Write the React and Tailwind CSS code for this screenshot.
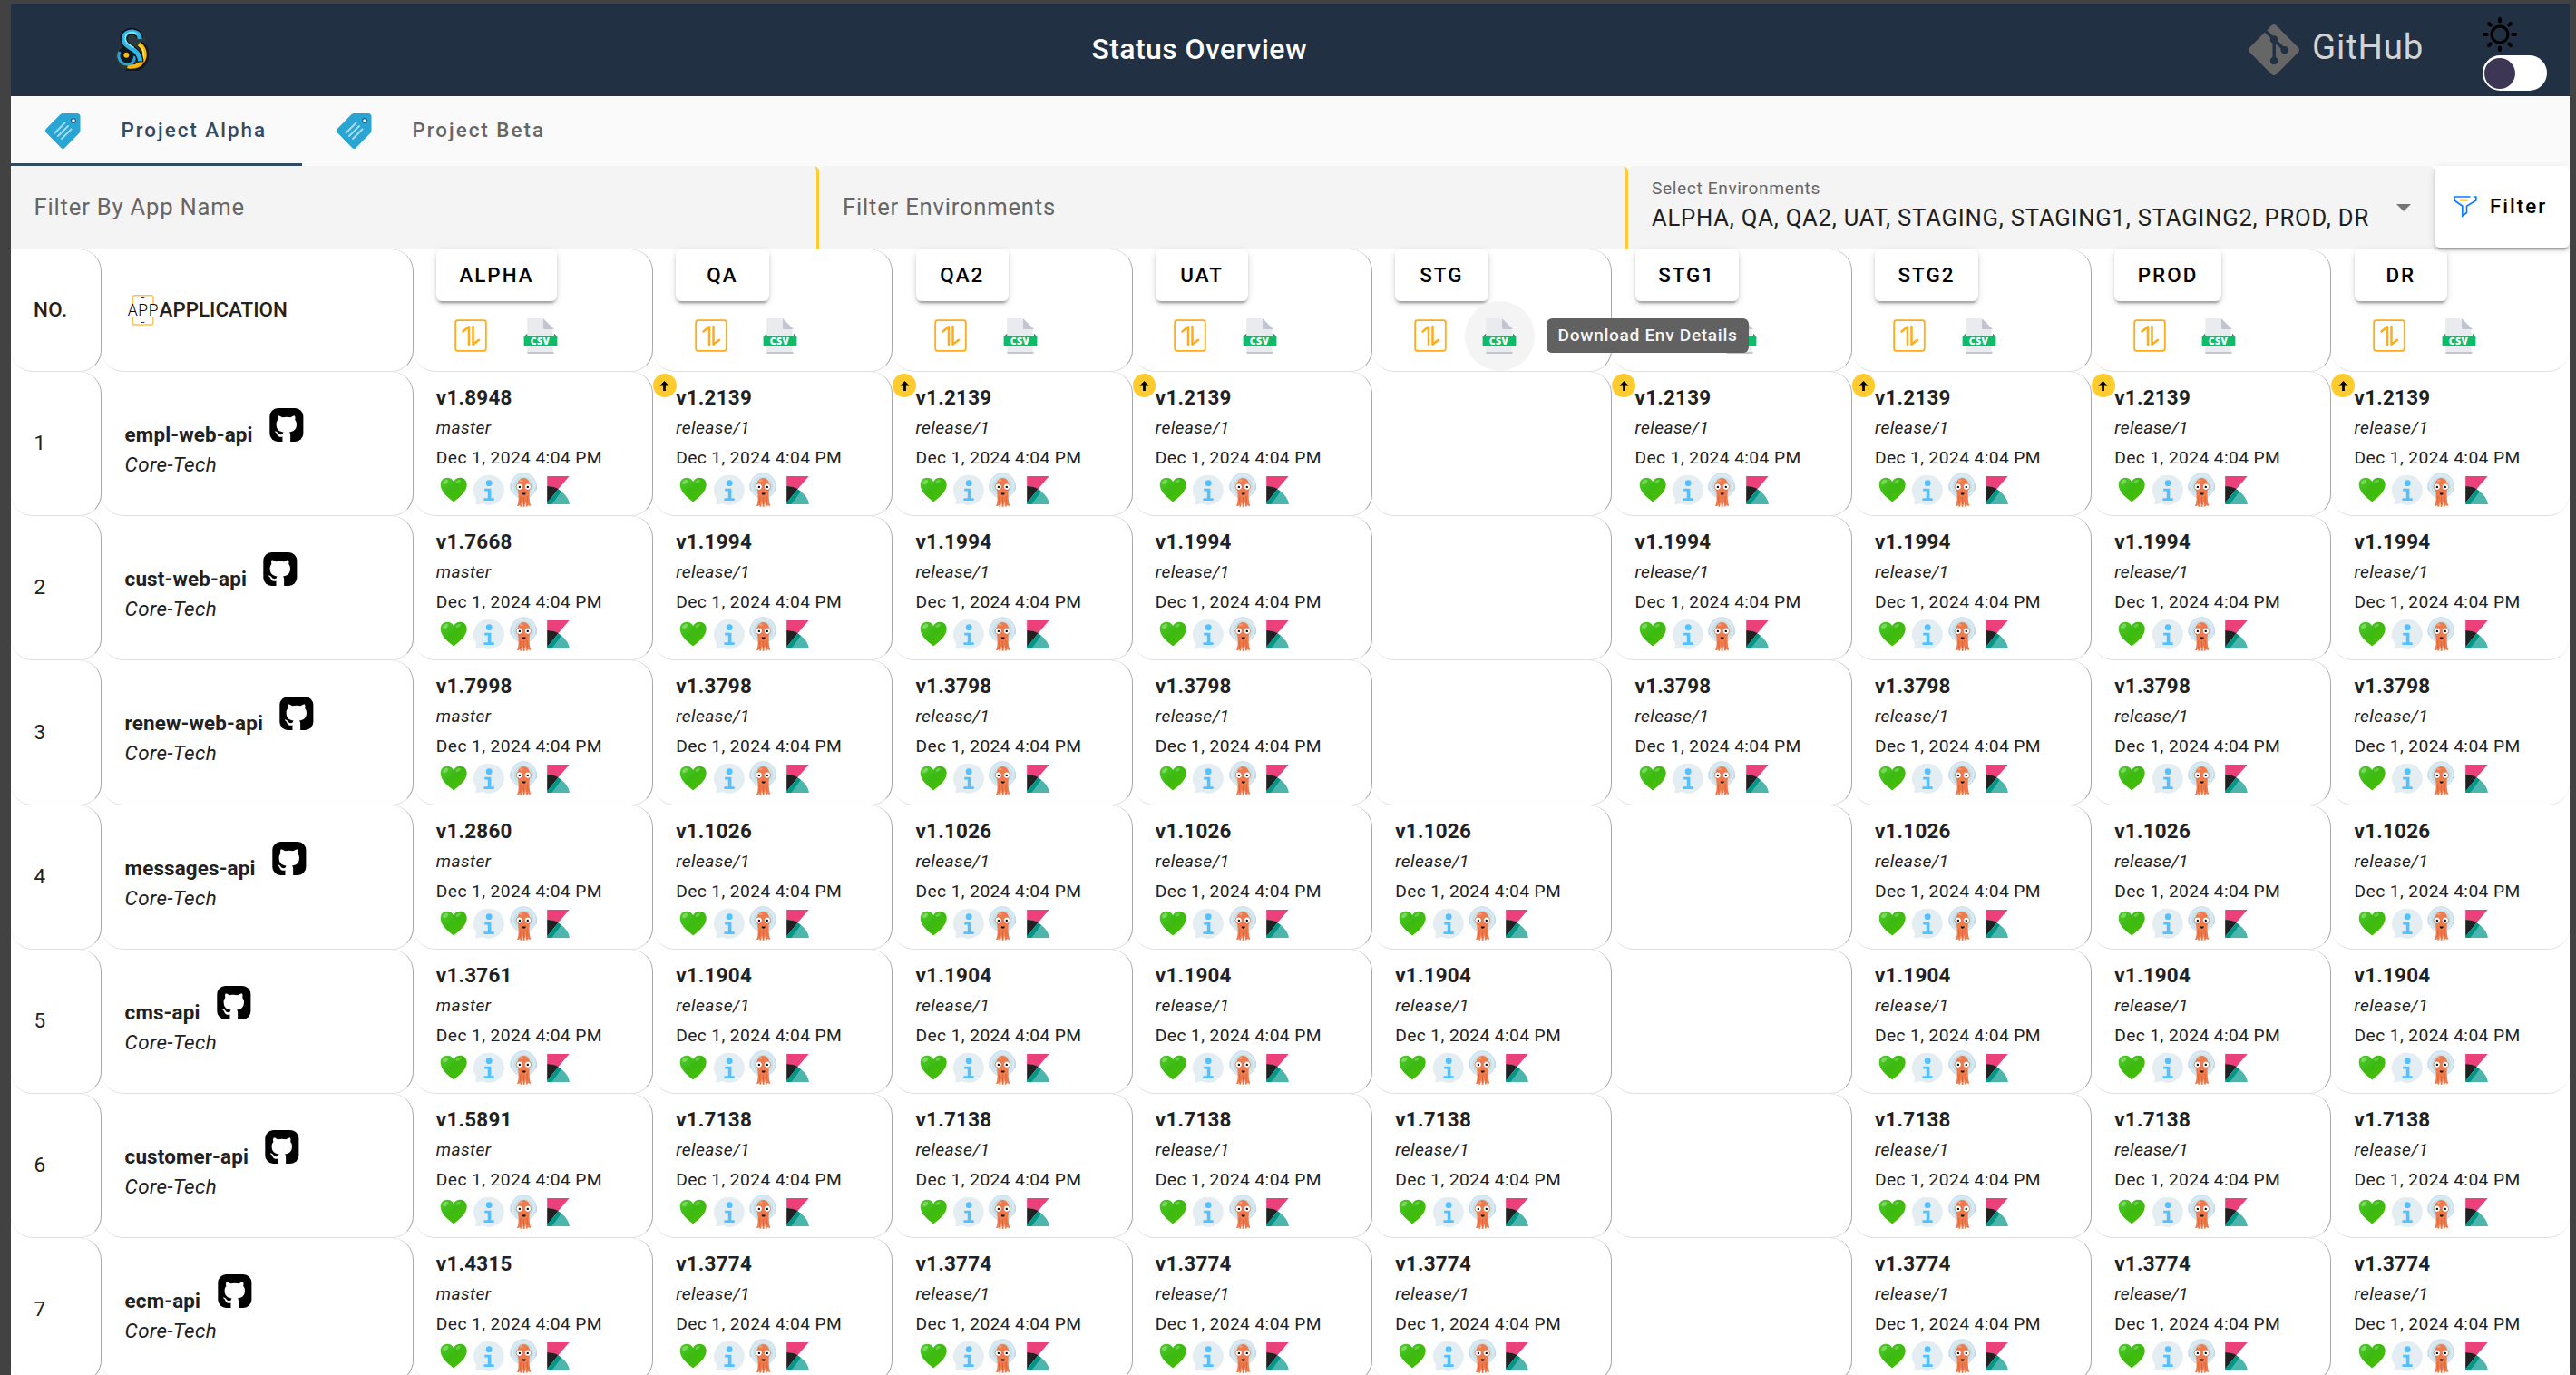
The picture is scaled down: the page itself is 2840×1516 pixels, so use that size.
import React from 'react';
import { SiGit } from 'react-icons/si';

const ENVS = ['ALPHA', 'QA', 'QA2', 'UAT', 'STG', 'STG1', 'STG2', 'PROD', 'DR'];

const APPS = [
  { name: 'empl-web-api', alpha: 'v1.8948', release: 'v1.2139', missing: 'STG', pending: true },
  { name: 'cust-web-api', alpha: 'v1.7668', release: 'v1.1994', missing: 'STG' },
  { name: 'renew-web-api', alpha: 'v1.7998', release: 'v1.3798', missing: 'STG' },
  { name: 'messages-api', alpha: 'v1.2860', release: 'v1.1026', missing: 'STG1' },
  { name: 'cms-api', alpha: 'v1.3761', release: 'v1.1904', missing: 'STG1' },
  { name: 'customer-api', alpha: 'v1.5891', release: 'v1.7138', missing: 'STG1' },
  { name: 'ecm-api', alpha: 'v1.4315', release: 'v1.3774', missing: 'STG1' },
];

const ROW = 'grid grid-cols-[100px_343.65px_repeat(8,264.35px)_minmax(0,1fr)]';
const CELL =
  'relative rounded-[24px] border-r border-b border-r-[#a9a9a9] border-b-[#e0e0e0] last:border-r-0';

function Logo() {
  return (
    <svg className="h-[48px] w-[38px]" viewBox="0 0 38 48" fill="none">
      <ellipse cx="20" cy="14" rx="14" ry="13.5" fill="#2a3a3c" />
      <ellipse cx="18.5" cy="32.5" rx="17" ry="15" fill="#2b3833" />
      <path d="M28 18.500c7 4.500 8.500 13.500 4 20-4 6-11.500 8-18 5.500" stroke="#15181d" strokeWidth="8" />
      <path d="M27 18.500c7 4.500 8 13 4.500 18.500-4 6-10 7.500-17 6" stroke="#f7b512" strokeWidth="4.500" />
      <path d="M28 20c4.500 4 5.500 10 3.500 15" stroke="#ffe13a" strokeWidth="1.800" />
      <circle cx="14" cy="31.500" r="10.500" fill="#0c1824" />
      <path d="M6 27c-3 6 .5 13.500 7.500 14 7 .3 9.500-5.500 9-9.500" stroke="#2f9fd0" strokeWidth="3.200" />
      <path
        d="M28 12c0-9-16-10-17.500-.5C9.500 20 17 21.500 22 25.500c4.500 3.500 6.500 8 6.500 13"
        stroke="#0b131c"
        strokeWidth="8"
      />
      <path
        d="M28 13c1-10-16-11-17.500-1.500C9.500 20 17 21.500 22 25.500c4.500 3.500 6.500 8 6.500 12"
        stroke="#2fb4e6"
        strokeWidth="5"
      />
      <path d="M25.500 8c-4-4-12-3-13.200 3.200-.8 6.500 4.700 8.300 9.200 11.300" stroke="#8be4fb" strokeWidth="1.600" />
      <circle cx="13.300" cy="30.700" r="3" fill="#f9b91c" />
    </svg>
  );
}

function TagIcon() {
  return (
    <svg className="h-[39px] w-[39px]" viewBox="0 0 39 39">
      <path
        d="M19.500 0H35a3.500 3.500 0 0 1 3.500 3.500v15.200c0 1.200-.3 2-1.100 3L21.500 38a3 3 0 0 1-4.200 0L.9 21.300a3 3 0 0 1 0-4.200L16.300 1.300A4.600 4.600 0 0 1 19.500 0z"
        fill="#29a5d3"
      />
      <circle cx="31" cy="8" r="2.400" fill="#fff" stroke="#1b5f86" strokeWidth="1.200" />
      <g stroke="#a4dbee" strokeWidth="2" strokeLinecap="round">
        <path d="M21.500 10.500 10.500 21.500M25 14 14 25M28.500 17.500 18 28" />
      </g>
    </svg>
  );
}

function SunIcon() {
  return (
    <svg className="h-[38px] w-[38px]" viewBox="0 0 38 38" fill="none" stroke="#000">
      <circle cx="19" cy="19" r="9" strokeWidth="3.200" />
      <g strokeWidth="4" strokeLinecap="round">
        <path d="M19 2v2.600M19 33.400V36M2 19h2.600M33.400 19H36M7 7l1.700 1.700M29.300 29.300 31 31M31 7l-1.700 1.700M8.700 29.300 7 31" />
      </g>
    </svg>
  );
}

function FunnelIcon() {
  return (
    <svg className="h-[24px] w-[26px]" viewBox="0 0 26 24" fill="none">
      <path
        d="M18.500 1H1v4l8.800 6.300V22l4.700-3.500v-7.200L24.800 5V1h-3"
        stroke="#0d7bff"
        strokeWidth="1.700"
      />
      <path d="M7 4.600h8.500" stroke="#ffb300" strokeWidth="2" />
    </svg>
  );
}

function AppPhoneIcon() {
  return (
    <svg className="h-[38px] w-[36px]" viewBox="0 0 36 38" fill="none">
      <path
        d="M8.300 13.500V5A2.300 2.300 0 0 1 10.600 2.700h18A2.300 2.300 0 0 1 30.900 5v8.500M8.300 26v6.700A2.300 2.300 0 0 0 10.600 35h18a2.300 2.300 0 0 0 2.300-2.300V26"
        stroke="#ffc04d"
        strokeWidth="1.500"
      />
      <path d="M17.800 5.500H21.300M17.800 32.500H21.300" stroke="#333" strokeWidth="1" />
      <text x="2.800" y="25" fontFamily="Roboto, sans-serif" fontWeight="300" fontSize="17.500" letterSpacing=".6" fill="#000">
        APP
      </text>
    </svg>
  );
}

function OctocatSquare() {
  return (
    <svg className="h-[38px] w-[38px]" viewBox="0 -.5 24.400 24.400">
      <rect x=".2" y=".2" width="23.800" height="23.700" rx="5.800" fill="#000" />
      <path
        transform="translate(.8 .6) scale(.94)"
        d="M9.025 25V21.065c-3.338.724-4.042-1.610-4.042-1.610C4.422 18.070 3.633 17.700 3.633 17.700c-1.087-.744.084-.729.084-.729 1.205.084 1.838 1.236 1.838 1.236 1.070 1.835 2.809 1.305 3.495.998.108-.776.417-1.305.760-1.605-2.665-.300-5.466-1.332-5.466-5.930 0-1.310.465-2.380 1.235-3.220-.135-.303-.540-1.523.105-3.176 0 0 1.005-.322 3.300 1.230.960-.267 1.980-.399 3-.405 1.020.006 2.040.138 3 .405 2.280-1.552 3.285-1.230 3.285-1.230.645 1.653.240 2.873.120 3.176.765.840 1.230 1.910 1.230 3.220 0 4.610-2.805 5.625-5.475 5.920.420.360.810 1.096.810 2.220V25z"
        fill="#fff"
      />
    </svg>
  );
}

function SortIcon() {
  return (
    <svg className="h-[38px] w-[38px]" viewBox="0 0 38 38" fill="none" stroke="#ffab1a">
      <rect x="2.200" y="2.200" width="33.600" height="33.600" rx="2.500" strokeWidth="1.800" />
      <path d="M10.500 14.500 17 9.300V29M21.500 9v19.700l6.500-5" strokeWidth="2.500" strokeLinecap="round" strokeLinejoin="round" />
    </svg>
  );
}

function CsvIcon({ labelled }) {
  return (
    <svg className="h-[39px] w-[38px]" viewBox="0 0 38 39">
      <path d="M5.500 0h16.500L33.500 12v26a1 1 0 0 1-1 1h-26a1.500 1.500 0 0 1-1.500-1.500V1A1 1 0 0 1 5.500 0z" fill="#e9ebef" transform="translate(-.8 0)" />
      <path d="M22 .3 34 12H23.500A1.500 1.500 0 0 1 22 10.500z" fill="#c0c5d0" />
      <path d="M4.300 37h29.400v.5a1.500 1.500 0 0 1-1.500 1.500H5.800a1.500 1.500 0 0 1-1.500-1.500z" fill="#c0c5d0" />
      <path d="M1.500 19.500 4.200 16.800v3.200H34v-3.200l2.500 2.700z" fill="#078a4b" />
      <path d="M.6 20H37.400v9.500a1.500 1.500 0 0 1-1.500 1.500H2.100a1.500 1.500 0 0 1-1.500-1.500z" fill="#10ba6b" />
      {labelled && (
        <text x="18.500" y="29.300" textAnchor="middle" fontFamily="'Open Sans', sans-serif" fontWeight="800" fontSize="10.500" fill="#fff">
          CSV
        </text>
      )}
    </svg>
  );
}

function HeartIcon() {
  return (
    <svg className="h-[38px] w-[38.4px]" viewBox="0 0 38 38">
      <defs>
        <linearGradient id="heartFill" x1="0" y1="0" x2="1" y2="1">
          <stop offset="0" stopColor="#4fcb2c" />
          <stop offset=".45" stopColor="#3cba12" />
          <stop offset="1" stopColor="#4cbf00" />
        </linearGradient>
      </defs>
      <path
        d="M19 32.500C12 27 4.500 21 4.500 13.300c0-4.600 3.300-7.500 7.300-7.500 3.200 0 5.800 1.500 7.200 4.300 1.400-2.800 4-4.300 7.200-4.300 4 0 7.300 2.900 7.300 7.500C33.500 21 26 27 19 32.500z"
        fill="url(#heartFill)"
      />
      <ellipse cx="10" cy="10.500" rx="3.300" ry="2" transform="rotate(-35 10 10.500)" fill="#8be070" opacity=".75" />
      <ellipse cx="24" cy="9.800" rx="3" ry="1.600" transform="rotate(-30 24 9.800)" fill="#8be070" opacity=".55" />
    </svg>
  );
}

function InfoIcon() {
  return (
    <svg className="h-[38px] w-[38.4px]" viewBox="0 0 38 38">
      <path d="M20 2.700a16.600 16.600 0 1 1-7.500 31.400c-2.500 1.100-5.300 1.400-8 .7 1.400-1.800 1.700-4 1-6.300A16.600 16.600 0 0 1 20 2.700z" fill="#e3edf2" />
      <circle cx="20" cy="11.700" r="3.400" fill="#53c1ff" />
      <path d="M15 17.800h7.200v10.500H25.500v2.600H14.300v-2.600h4.300v-7.900H15z" fill="#53c1ff" />
    </svg>
  );
}

function ArgoIcon() {
  return (
    <svg className="h-[38px] w-[38.4px]" viewBox="0 0 38 38">
      <rect x="4.200" y="10.500" width="29.600" height="10" rx="3" fill="#c2d4ec" />
      <circle cx="19" cy="14.600" r="14" fill="#d9e8f1" stroke="#c3d9ea" strokeWidth=".8" />
      <circle cx="19" cy="15.500" r="10.800" fill="#c6e2e6" />
      <path
        d="M12.300 14.500c0-5 2.700-8.600 6.900-8.600s6.900 3.600 6.900 8.600c0 4-.9 6-.7 10.500.1 4 .3 9 1.800 11.600-1.500.5-2.700.1-3.300-.9-.2 1.400-.8 2-1.800 2-.6-2-.7-4-.9-6l-1 6.200h-1.500l-.9-6.200c-.2 2.600-.3 4.500-1.400 6.300-.9-.2-1.400-.9-1.500-2.100-.7 1-1.700 1.300-3.200.9 2-2.800 1.700-7.600 1.700-11.800.1-4-1.100-6.500-1.100-10.500z"
        fill="#ef7b4d"
      />
      <path d="M15.500 26v8M19.200 27v8M23 26v8" stroke="#d95c34" strokeWidth=".8" />
      <ellipse cx="16.500" cy="8.800" rx="2" ry="1.200" fill="#f8a585" opacity=".8" />
      <circle cx="14.500" cy="15.700" r="3.600" fill="#fff" stroke="#c9502c" strokeWidth=".6" />
      <circle cx="23.800" cy="15.700" r="3.600" fill="#fff" stroke="#c9502c" strokeWidth=".6" />
      <circle cx="14.700" cy="15.900" r="1.200" fill="#111" />
      <circle cx="23.600" cy="15.900" r="1.200" fill="#111" />
      <path d="M17.500 22.500h4c0 3-4 3-4 0z" fill="#1b0f0c" />
    </svg>
  );
}

function KibanaIcon() {
  return (
    <svg className="h-[38px] w-[38.4px]" viewBox="0 0 38 38">
      <path d="M7 4h24.500L19 18.500C15 16 11 15 7 15z" fill="#ec407a" />
      <path d="M7 15c4.700 0 8.700 1 12.400 3.300L7 33.500z" fill="#212121" />
      <path d="M19.400 18.300 23 21.100 13.500 35H7v-1.800z" fill="#009688" />
      <path d="M23 21.100c4.800 3.600 7.800 8.300 8.800 13.900H12z" fill="#4db6ac" />
    </svg>
  );
}

function PendingBadge() {
  return (
    <span className="absolute top-[2px] left-0 flex h-[26px] w-[25.600px] items-center justify-center rounded-full bg-[#ffcb2f]">
      <svg className="h-[11px] w-[11px]" viewBox="0 0 11 11">
        <path d="M5.500 0 10.700 5.400H6.900V11H4.100V5.400H.3z" fill="#000" />
      </svg>
    </span>
  );
}

function EnvHeader({ env }) {
  return (
    <div className={`${CELL} h-[135px] px-[25.2px]`}>
      <button className="flex h-[57px] min-w-[102.4px] items-center justify-center rounded-[6.4px] bg-white px-[25.6px] text-[22.4px] leading-none font-medium tracking-[2px] text-black shadow-[0_5px_2px_-3px_rgba(0,0,0,0.2),0_3px_3px_0_rgba(0,0,0,0.14),0_2px_8px_0_rgba(0,0,0,0.12)]">
        {env}
      </button>
      <div className="flex">
        <span className="flex size-[76.8px] items-center justify-center">
          <SortIcon />
        </span>
        <span
          className={
            env === 'STG'
              ? 'flex size-[76.8px] items-center justify-center rounded-full bg-[#f4f4f4]'
              : 'flex size-[76.8px] items-center justify-center'
          }
        >
          <CsvIcon labelled={env !== 'STG1'} />
        </span>
      </div>
      {env === 'STG' && (
        <div className="absolute top-[76px] left-[192px] z-10 flex h-[38px] w-[223px] items-center justify-center rounded-[6.4px] bg-[#616161] text-[19.2px] leading-none font-medium tracking-[0.64px] whitespace-nowrap text-[#f5f5f5]">
          Download Env Details
        </div>
      )}
    </div>
  );
}

function StatusCell({ version, branch, pending }) {
  return (
    <div className={`${CELL} px-[25.2px] pt-[12px]`}>
      {pending && <PendingBadge />}
      <div className="text-[22.4px] leading-[33px] font-bold tracking-[0.25px]">{version}</div>
      <div className="text-[19.2px] leading-[33px] italic">{branch}</div>
      <div className="text-[19.2px] leading-[33px]">Dec 1, 2024 4:04 PM</div>
      <div className="flex">
        <HeartIcon />
        <InfoIcon />
        <ArgoIcon />
        <KibanaIcon />
      </div>
    </div>
  );
}

export default function App() {
  return (
    <div className="h-[1516px] w-[2840px] overflow-hidden bg-[#424242] pt-1 pr-[7px] pl-3 font-[Roboto,sans-serif]">
      <div className="h-full overflow-hidden bg-white">
        <header className="grid h-[102px] grid-cols-[1fr_240px_1fr] items-center bg-[#223043]">
          <div className="pb-[3px] pl-[114px]">
            <Logo />
          </div>
          <h1 className="-ml-[99px] pb-[2px] text-[32px] leading-none font-medium tracking-[0.4px] whitespace-nowrap text-white">
            Status Overview
          </h1>
          <div className="flex h-full justify-end pr-[25px]">
            <div className="flex items-center gap-[14px] pr-[65px]">
              <SiGit className="size-[56px] text-[#666]" />
              <span className="pb-[6px] text-[38.4px] leading-none tracking-[0.8px] text-[#d3d3d3]">GitHub</span>
            </div>
            <div className="pt-[15px]">
              <SunIcon />
              <div className="mt-[4px] flex h-[39px] w-[71px] items-center rounded-full bg-white pl-[2px]">
                <span className="size-[34px] rounded-full bg-[#3d3755]" />
              </div>
            </div>
          </div>
        </header>

        <nav className="flex h-[77px] bg-[#fafafa] text-[22.4px] font-medium tracking-[2px]">
          <div className="flex w-[321px] items-center gap-[44px] border-b-3 border-[#334a63] pt-[3px] pl-[38.4px] whitespace-nowrap text-[#334a63]">
            <TagIcon />
            <span className="pb-[1px]">Project Alpha</span>
          </div>
          <div className="flex items-center gap-[44px] px-[38.4px] text-[#666]">
            <TagIcon />
            <span className="pb-[1px]">Project Beta</span>
          </div>
        </nav>

        <div className="grid h-[92px] grid-cols-[891px_892px_minmax(0,1fr)_149px] text-[25.6px] tracking-[0.8px] text-[#666]">
          <div className="flex items-center rounded-t-[6px] border-r-3 border-r-[#ffcb2f] bg-[#f4f4f4] pb-[2px] pl-[25.6px] shadow-[inset_0_-1px_0_#8c8c8c]">
            Filter By App Name
          </div>
          <div className="flex items-center rounded-t-[6px] border-r-3 border-r-[#ffcb2f] bg-[#f4f4f4] pb-[2px] pl-[26px] shadow-[inset_0_-1px_0_#8c8c8c]">
            Filter Environments
          </div>
          <div className="flex items-center justify-between rounded-t-[6px] bg-[#f4f4f4] pr-[26px] pl-[26px] shadow-[inset_0_-1px_0_#8c8c8c]">
            <div className="pb-[5px]">
              <div className="text-[19.2px] leading-[28px] tracking-[0.6px]">Select Environments</div>
              <div className="text-[25.6px] leading-[37px] text-[#1f1f1f]">
                ALPHA, QA, QA2, UAT, STAGING, STAGING1, STAGING2, PROD, DR
              </div>
            </div>
            <svg className="h-[8px] w-[16px]" viewBox="0 0 16 8">
              <path d="M0 0h16L8 8z" fill="#757575" />
            </svg>
          </div>
          <button className="z-10 flex h-[90px] items-center gap-[14px] rounded-[6.4px] bg-white pl-[21px] text-[22.4px] font-medium tracking-[2px] text-black shadow-[0_5px_2px_-3px_rgba(0,0,0,0.2),0_3px_3px_0_rgba(0,0,0,0.14),0_2px_8px_0_rgba(0,0,0,0.12)]">
            <FunnelIcon />
            Filter
          </button>
        </div>

        <div className="text-[22.4px] tracking-[0.4px] text-[#212121]">
          <div className={ROW}>
            <div className={`${CELL} flex items-center pl-[25px] font-medium`}>NO.</div>
            <div className={`${CELL} flex items-center pl-[25.6px] font-medium`}>
              <AppPhoneIcon />
              <span className="ml-[2px] tracking-normal">APPLICATION</span>
            </div>
            {ENVS.map((env) => (
              <EnvHeader key={env} env={env} />
            ))}
          </div>
          {APPS.map((app, i) => (
            <div key={app.name} className={`${ROW} h-[159.2px]`}>
              <div className={`${CELL} flex items-center pl-[25.6px]`}>{i + 1}</div>
              <div className={`${CELL} pt-[39px] pl-[25.6px]`}>
                <div className="flex items-baseline gap-[18.4px]">
                  <span className="leading-[33px] font-bold tracking-[0.15px]">{app.name}</span>
                  <OctocatSquare />
                </div>
                <div className="leading-[33px] italic">Core-Tech</div>
              </div>
              {ENVS.map((env) =>
                env === app.missing ? (
                  <div key={env} className={CELL} />
                ) : (
                  <StatusCell
                    key={env}
                    version={env === 'ALPHA' ? app.alpha : app.release}
                    branch={env === 'ALPHA' ? 'master' : 'release/1'}
                    pending={app.pending && env !== 'ALPHA'}
                  />
                )
              )}
            </div>
          ))}
        </div>
      </div>
    </div>
  );
}
